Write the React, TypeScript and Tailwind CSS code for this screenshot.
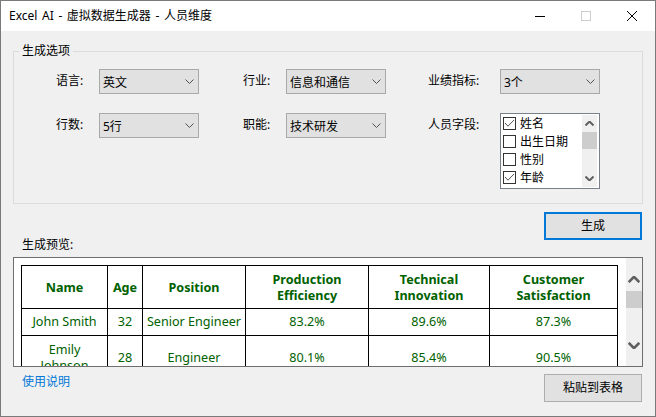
const rows = [
  { name: "John Smith", age: "32", position: "Senior Engineer", a: "83.2%", b: "89.6%", c: "87.3%", height: "h-[27px]" },
  { name: "Emily Johnson", age: "28", position: "Engineer", a: "80.1%", b: "85.4%", c: "90.5%", height: "h-[44px]" },
];

const headers = ["Name", "Age", "Position", "Production Efficiency", "Technical Innovation", "Customer Satisfaction"];
const colWidths = ["w-[86px]", "w-[35px]", "w-[103px]", "w-[123px]", "w-[121px]", "w-[128px]"];

function Chevron({ up, className }: { up?: boolean; className: string }) {
  return (
    <svg viewBox="0 0 9 5" className={className} fill="none" stroke="currentColor" aria-hidden="true">
      <path d={up ? "M0.5 4.5l4-4 4 4" : "M0.5 0.5l4 4 4-4"} />
    </svg>
  );
}

function Combo({ value }: { value: string }) {
  return (
    <div className="flex h-[25px] w-[100px] items-center justify-between border border-[#a9a9a9] bg-[#e1e1e1] pl-[3px] pr-[4px] text-[12px] text-black">
      <span className="pt-[2px]">{value}</span>
      <Chevron className="h-[5px] w-[9px] text-[#505050]" />
    </div>
  );
}

function Label({ text }: { text: string }) {
  return <span className="text-[12px] leading-[23px] text-black">{text}</span>;
}

function CheckRow({ label, checked }: { label: string; checked?: boolean }) {
  return (
    <div className="flex h-[18px] items-center gap-[4px] text-[12px] leading-none text-black">
      <span className="flex h-[13px] w-[13px] shrink-0 items-center justify-center border border-[#333333] bg-white">
        {checked && (
          <svg viewBox="0 0 11 11" className="h-[11px] w-[11px]" fill="none" stroke="#555555" aria-hidden="true">
            <path d="M1 5l3 3.2L10 2" />
          </svg>
        )}
      </span>
      <span className="pt-[2px]">{label}</span>
    </div>
  );
}

function FieldList() {
  return (
    <div className="flex h-[76px] w-[100px] justify-between border border-[#7a7f8c] bg-white">
      <div className="flex flex-col pl-[2px]">
        <CheckRow label="姓名" checked />
        <CheckRow label="出生日期" />
        <CheckRow label="性别" />
        <CheckRow label="年龄" checked />
      </div>
      <div className="mr-[2px] mt-[1px] flex h-[72px] w-[15px] flex-col items-center bg-[#f0f0f0]">
        <div className="flex h-[17px] items-center">
          <Chevron up className="h-[5px] w-[9px] stroke-2 text-[#606060]" />
        </div>
        <div className="h-[17px] w-full bg-[#cdcdcd]" />
        <div className="mt-auto flex h-[17px] items-center">
          <Chevron className="h-[5px] w-[9px] stroke-2 text-[#606060]" />
        </div>
      </div>
    </div>
  );
}

function PreviewTable() {
  return (
    <table className="h-fit w-[597px] shrink-0 table-fixed border-collapse text-[12.6px] text-[#006100]">
      <colgroup>
        {colWidths.map((w) => (
          <col key={w} className={w} />
        ))}
      </colgroup>
      <thead>
        <tr className="h-[43px]">
          {headers.map((h) => (
            <th key={h} className="border border-black px-[4px] pt-[1px] text-center font-bold leading-[16px]">
              {h}
            </th>
          ))}
        </tr>
      </thead>
      <tbody>
        {rows.map((r) => (
          <tr key={r.name} className={r.height}>
            {[r.name, r.age, r.position, r.a, r.b, r.c].map((v, i) => (
              <td key={i} className="border border-black px-[2px] text-center leading-[16px]">
                {v}
              </td>
            ))}
          </tr>
        ))}
      </tbody>
    </table>
  );
}

export default function App() {
  return (
    <div className="flex h-[417px] w-[656px] flex-col overflow-hidden border border-[#7a7a7a] bg-[#f0f0f0] font-['Noto_Sans','Noto_Sans_CJK_SC',sans-serif]">
      <div className="flex h-[30px] shrink-0 items-center justify-between bg-white pl-[8px] text-[12px] text-black">
        <span className="[word-spacing:1.5px]">Excel AI - 虚拟数据生成器 - 人员维度</span>
        <div className="flex items-center">
          <div className="flex h-[30px] w-[46px] items-center justify-center">
            <span className="h-px w-[10px] bg-black" />
          </div>
          <div className="flex h-[30px] w-[46px] items-center justify-center">
            <span className="h-[10px] w-[10px] border border-[#cccccc]" />
          </div>
          <div className="flex h-[30px] w-[46px] items-center justify-center">
            <svg viewBox="0 0 10 10" className="h-[10px] w-[10px]" stroke="black" aria-hidden="true">
              <path d="M0 0l10 10M10 0L0 10" />
            </svg>
          </div>
        </div>
      </div>

      <div className="ml-[12px] flex w-[630px] flex-col">
        <fieldset className="relative mt-[20px] h-[153px] border border-[#dcdcdc]">
          <span className="absolute left-[5px] top-[-9px] bg-[#f0f0f0] px-[3px] text-[12px] leading-[16px] text-black">
            生成选项
          </span>
          <div className="ml-[42px] mt-[17px] grid grid-cols-[43px_100px_44px_43px_100px_42px_72px_100px] grid-rows-[25px_76px] gap-y-[19px]">
            <Label text="语言:" />
            <Combo value="英文" />
            <span />
            <Label text="行业:" />
            <Combo value="信息和通信" />
            <span />
            <Label text="业绩指标:" />
            <Combo value="3个" />
            <Label text="行数:" />
            <Combo value="5行" />
            <span />
            <Label text="职能:" />
            <Combo value="技术研发" />
            <span />
            <Label text="人员字段:" />
            <FieldList />
          </div>
        </fieldset>

        <button className="ml-auto mr-px mt-[8px] h-[28px] w-[98px] border-2 border-[#0078d7] bg-[#e1e1e1] text-[12px] text-black">
          生成
        </button>

        <span className="ml-[9px] h-[10px] text-[12px] leading-[10px] text-black">生成预览:</span>

        <div className="mt-[7px] flex h-[110px] justify-between overflow-hidden border border-[#6e6e6e] bg-white pl-[7px] pt-[7px]">
          <PreviewTable />
          <div className="mt-[-7px] flex h-[108px] w-[16px] shrink-0 flex-col items-center bg-[#f0f0f0]">
            <div className="flex h-[33px] items-end pb-[8px]">
              <Chevron up className="h-[7px] w-[12px] stroke-2 text-[#606060]" />
            </div>
            <div className="h-[17px] w-full bg-[#cdcdcd]" />
            <div className="mb-[17px] mt-auto flex">
              <Chevron className="h-[7px] w-[12px] stroke-2 text-[#606060]" />
            </div>
          </div>
        </div>

        <div className="mt-[7px] flex items-start justify-between pl-[9px] pr-px">
          <a className="mt-[1px] text-[12px] leading-[14px] text-[#0078d7]">使用说明</a>
          <button className="h-[28px] w-[98px] border border-[#adadad] bg-[#e1e1e1] text-[12px] text-black">
            粘贴到表格
          </button>
        </div>
      </div>
    </div>
  );
}
